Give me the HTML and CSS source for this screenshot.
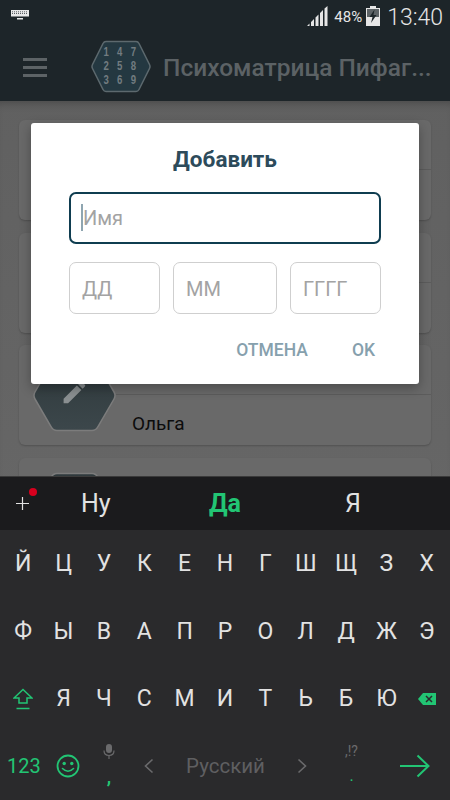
FILE: index.html
```html
<!DOCTYPE html>
<html lang="ru">
<head>
  <meta charset="UTF-8">
  <meta name="viewport" content="width=device-width, initial-scale=1.0">
  <title>Психоматрица Пифагора</title>
  <link rel="stylesheet" href="styles.css">
</head>
<body>
  <svg class="defs" width="0" height="0">
    <defs>
      <linearGradient id="hexFill" x1="0" y1="0" x2="0" y2="1">
        <stop offset="0" stop-color="#2f393c"/>
        <stop offset="1" stop-color="#3c474b"/>
      </linearGradient>
      <path id="hexShape" fill="url(#hexFill)" stroke="#7c7c7c" stroke-width="1.500" d="M24 1.500h35q4 0 6 4L81 33q2 3.500 0 7L65 67.500q-2 4-6 4H24q-4 0-6-4L2 40q-2-3.500 0-7L18 5.500q2-4 6-4z"/>
    </defs>
  </svg>
  <div class="screen">
    <div class="status-bar">
      <svg class="status-kbd" width="18" height="10" viewBox="0 0 18 10">
        <path fill="#e8e8e8" d="M0 0h18v6.500H0z"/>
        <path stroke="#1d2529" stroke-width=".7" stroke-dasharray="1 1" d="M1 1.800h16M1 3.500h16"/>
        <path fill="#e8e8e8" d="M6 8h6v1.500H6z"/>
      </svg>
      <svg class="status-signal" width="21" height="20" viewBox="0 0 21 20">
        <path fill="#e6e6e6" d="M0 20l2.500-2.500V20zM4 20v-4l3-3v7zM8.500 20v-8.500l3-3V20zM13 20V7l3-3v16zM17.500 20V2.500l3-2.500v20z"/>
      </svg>
      <span class="status-pct">48%</span>
      <svg class="status-battery" width="14" height="20" viewBox="0 0 14 20">
        <path fill="#e6e6e6" d="M4 0h6v2h4v18H0V2h4z"/>
        <path fill="#5d6366" d="M1 3h12v8H1z"/>
        <path fill="#1d2529" d="M8.500 3.500L3.500 11h3l-1.500 6 5.500-8H7.500z"/>
      </svg>
      <span class="status-time">13:40</span>
    </div>

    <div class="app-bar">
      <div class="burger"><i></i><i></i><i></i></div>
      <svg class="logo" width="60" height="54" viewBox="0 0 60 54">
        <path fill="#243841" stroke="#5d696e" stroke-width="1.500" stroke-linejoin="round" d="M15 1.500h30q2 0 3 2l10.500 21q1 2 0 4L48 49.500q-1 2-3 2H15q-2 0-3-2L1.500 28.500q-1-2 0-4L12 3.500q1-2 3-2z"/>
        <g class="logo-digits" transform="scale(.8 1)">
          <text x="19" y="16.500">1</text><text x="36" y="16.500">4</text><text x="53" y="16.500">7</text>
          <text x="19" y="30.500">2</text><text x="36" y="30.500">5</text><text x="53" y="30.500">8</text>
          <text x="19" y="44.500">3</text><text x="36" y="44.500">6</text><text x="53" y="44.500">9</text>
        </g>
      </svg>
      <div class="app-title">Психоматрица Пифаг...</div>
    </div>

    <div class="list">
      <div class="card">
        <svg class="hex" width="83" height="73" viewBox="0 0 83 73"><use href="#hexShape"/></svg>
        <div class="card-body"><div class="card-row"></div><div class="card-row"></div></div>
      </div>
      <div class="card">
        <svg class="hex" width="83" height="73" viewBox="0 0 83 73"><use href="#hexShape"/></svg>
        <div class="card-body"><div class="card-row"></div><div class="card-row"></div></div>
      </div>
      <div class="card">
        <svg class="hex" width="83" height="73" viewBox="0 0 83 73">
          <use href="#hexShape"/>
          <path fill="#8a8f91" transform="translate(27 19) scale(1.200)" d="M3 17.250V21h3.750L17.810 9.940l-3.750-3.750zM20.710 7.040a1 1 0 0 0 0-1.410l-2.340-2.340a1 1 0 0 0-1.410 0l-1.830 1.830 3.750 3.750z"/>
        </svg>
        <div class="card-body"><div class="card-row"></div><div class="card-row card-name">Ольга</div></div>
      </div>
      <div class="card">
        <svg class="hex" width="83" height="73" viewBox="0 0 83 73"><use href="#hexShape"/></svg>
        <div class="card-body"><div class="card-row"></div><div class="card-row"></div></div>
      </div>
    </div>

    <div class="dialog">
      <div class="dialog-title">Добавить</div>
      <div class="field field-active"><span class="caret"></span>Имя</div>
      <div class="date-row">
        <div class="field">ДД</div>
        <div class="field">ММ</div>
        <div class="field">ГГГГ</div>
      </div>
      <div class="dialog-actions">
        <span>ОТМЕНА</span>
        <span>OK</span>
      </div>
    </div>

    <div class="keyboard">
      <div class="suggest">
        <div class="suggest-plus">
          <svg width="13" height="13" viewBox="0 0 13 13"><path stroke="#e2e2e2" stroke-width="1.200" d="M0 6.500h13M6.500 0v13"/></svg>
          <span class="red-dot"></span>
        </div>
        <div class="suggest-word suggest-a">Ну</div>
        <div class="suggest-word suggest-b">Да</div>
        <div class="suggest-word suggest-c">Я</div>
      </div>
      <div class="keys">
        <span>Й</span><span>Ц</span><span>У</span><span>К</span><span>Е</span><span>Н</span><span>Г</span><span>Ш</span><span>Щ</span><span>З</span><span>Х</span>
        <span>Ф</span><span>Ы</span><span>В</span><span>А</span><span>П</span><span>Р</span><span>О</span><span>Л</span><span>Д</span><span>Ж</span><span>Э</span>
        <span>
          <svg width="20" height="22" viewBox="0 0 20 22"><path fill="none" stroke="#22c574" stroke-width="1.500" d="M10 1.500L1 10h5v5h8v-5h5z"/><path stroke="#22c574" stroke-width="1.500" d="M3.500 20.500h13"/></svg>
        </span>
        <span>Я</span><span>Ч</span><span>С</span><span>М</span><span>И</span><span>Т</span><span>Ь</span><span>Б</span><span>Ю</span>
        <span>
          <svg width="18" height="12" viewBox="0 0 18 12"><path fill="#22c574" d="M5 0h13v12H5L0 6z"/><path stroke="#2a2a2c" stroke-width="1.500" d="M8 3l6 6M14 3l-6 6"/></svg>
        </span>
      </div>
      <div class="bottom-row">
        <div class="key-123">123</div>
        <svg class="key-smile" width="24" height="24" viewBox="0 0 24 24">
          <circle cx="12" cy="12" r="10.500" fill="none" stroke="#22c574" stroke-width="1.800"/>
          <circle cx="8.200" cy="9.500" r="1.700" fill="#22c574"/>
          <circle cx="15.800" cy="9.500" r="1.700" fill="#22c574"/>
          <path fill="none" stroke="#22c574" stroke-width="1.600" stroke-linecap="round" d="M6.500 14.500q5.500 5.500 11 0"/>
        </svg>
        <div class="key-comma">
          <svg width="12" height="15" viewBox="0 0 12 15"><rect x="3" y="0" width="6" height="9" rx="3" fill="#6a6a6c"/><path fill="none" stroke="#6a6a6c" stroke-width="1.200" d="M1 6.500q0 5 5 5t5-5M6 11.500V15"/></svg>
          <span>,</span>
        </div>
        <div class="lang">
          <svg width="10" height="16" viewBox="0 0 10 16"><path fill="none" stroke="#6a6a6c" stroke-width="1.600" d="M8.500 1.500L1.500 8l7 6.500"/></svg>
          <span>Русский</span>
          <svg width="10" height="16" viewBox="0 0 10 16"><path fill="none" stroke="#6a6a6c" stroke-width="1.600" d="M1.500 1.500L8.500 8l-7 6.500"/></svg>
        </div>
        <div class="key-period"><small>,!?</small><span>.</span></div>
        <svg class="key-enter" width="30" height="24" viewBox="0 0 30 24"><path fill="none" stroke="#22c574" stroke-width="2" d="M0 12h28M17.500 1.500L28.500 12 17.500 22.500"/></svg>
      </div>
    </div>
  </div>
</body>
</html>
```

FILE: styles.css
```css
html, body {
  margin: 0;
  padding: 0;
}
body {
  font-family: 'Roboto', sans-serif;
  background: #000;
}
.defs {
  position: absolute;
}
.screen {
  position: relative;
  width: 450px;
  height: 800px;
  overflow: hidden;
  display: flex;
  flex-direction: column;
  background: linear-gradient(#5f5f5f, #6a6a6a);
}
.status-bar {
  height: 33px;
  flex: none;
  display: flex;
  align-items: center;
  background: #1d2529;
  color: #e6e6e6;
  padding: 0 7px 0 11px;
}
.status-kbd {
  margin-right: auto;
  margin-top: -3px;
}
.status-signal {
  margin-top: -2px;
}
.status-pct {
  font-size: 15px;
  margin: 0 4px 0 6px;
}
.status-battery {
  margin-top: -2px;
  margin-right: 7px;
}
.status-time {
  font-size: 23px;
  font-weight: 300;
  padding-top: 1px;
}
.app-bar {
  height: 68px;
  flex: none;
  display: flex;
  align-items: center;
  background: #1d2529;
  box-sizing: border-box;
  padding-left: 23px;
}
.burger {
  width: 24px;
  display: flex;
  flex-direction: column;
  gap: 5px;
  margin-right: 44px;
}
.burger i {
  display: block;
  height: 3px;
  background: #5d6366;
}
.logo {
  margin-right: 12px;
  flex: none;
}
.logo-digits text {
  font-family: 'Liberation Sans', sans-serif;
  font-size: 12px;
  font-weight: bold;
  text-anchor: middle;
  fill: #727c80;
}
.app-title {
  font-size: 24.500px;
  font-weight: 500;
  color: #5c6265;
  white-space: nowrap;
}
.list {
  flex: 1;
  padding: 19px 19px 0;
  display: flex;
  flex-direction: column;
  gap: 12.5px;
  box-shadow: inset 0 8px 8px -6px rgba(0,0,0,0.25);
}
.card {
  height: 100px;
  flex: none;
  display: flex;
  padding-left: 14px;
  background: #696969;
  border-radius: 6px;
  box-shadow: 0 1px 2px rgba(0,0,0,0.2);
}
.hex {
  margin-top: 14px;
  flex: none;
}
.card-body {
  flex: 1;
  display: flex;
  flex-direction: column;
}
.card-row {
  height: 50px;
  box-sizing: border-box;
  padding-left: 16px;
}
.card-row:first-child {
  border-bottom: 1px solid #5c5c5c;
}
.card-name {
  font-size: 19px;
  line-height: 58px;
  color: #0c0c0c;
}
.dialog {
  position: absolute;
  left: 31px;
  top: 123px;
  width: 388px;
  height: 261px;
  box-sizing: border-box;
  padding: 0 38px;
  background: #fff;
  border-radius: 3px;
  box-shadow: 0 4px 12px rgba(0,0,0,0.3);
}
.dialog-title {
  height: 69px;
  line-height: 72px;
  text-align: center;
  font-size: 22.500px;
  font-weight: 700;
  color: #2d4b5b;
}
.field {
  position: relative;
  box-sizing: border-box;
  height: 52px;
  line-height: 52px;
  padding-left: 12px;
  border: 1px solid #cfcfcf;
  border-radius: 7px;
  font-size: 20px;
  color: #a3a3a3;
}
.field-active {
  height: 52px;
  border: 2px solid #0f3d50;
  line-height: 48px;
}
.caret {
  position: absolute;
  left: 10px;
  top: 10px;
  width: 2px;
  height: 27px;
  background: #8ea5b0;
}
.date-row {
  display: grid;
  grid-template-columns: 91px 104px 91px;
  gap: 13px;
  margin-top: 18px;
}
.dialog-actions {
  display: flex;
  justify-content: flex-end;
  gap: 44px;
  padding: 26px 6px 0 0;
  font-size: 17.500px;
  font-weight: 500;
  color: #86a0ad;
}
.keyboard {
  position: absolute;
  left: 0;
  right: 0;
  bottom: 0;
  height: 324px;
  display: flex;
  flex-direction: column;
  background: #2a2a2c;
  border-top: 1px solid #3a3a3a;
  box-sizing: border-box;
}
.suggest {
  position: relative;
  height: 53px;
  flex: none;
  background: #1b1b1d;
  display: grid;
  grid-template-columns: 44px 112px 138px 1fr;
  align-items: center;
  color: #e2e2e2;
}
.suggest-plus {
  position: relative;
  display: flex;
  justify-content: center;
}
.red-dot {
  position: absolute;
  left: 29px;
  top: -9px;
  width: 8px;
  height: 8px;
  border-radius: 50%;
  background: #d7001e;
}
.suggest-word {
  font-size: 25px;
  text-align: center;
}
.suggest-a {
  text-align: left;
  padding-left: 37px;
}
.suggest-b {
  font-weight: 700;
  color: #22c574;
}
.suggest-c {
  text-align: left;
  padding-left: 51px;
}
.keys {
  display: grid;
  grid-template-columns: repeat(11, 1fr);
  grid-auto-rows: 67.500px;
  padding: 0 3px;
  font-size: 23px;
  color: #e2e2e2;
}
.keys span {
  display: flex;
  align-items: center;
  justify-content: center;
}
.bottom-row {
  flex: 1;
  display: flex;
  align-items: center;
  position: relative;
}
.key-123 {
  font-size: 20px;
  color: #22c574;
  margin-left: 7px;
  width: 36px;
}
.key-smile {
  margin-left: 13px;
}
.key-comma {
  width: 24px;
  margin-left: 17px;
  padding-bottom: 4px;
  display: flex;
  flex-direction: column;
  align-items: center;
  gap: 10px;
  color: #22c574;
  font-size: 18px;
  font-weight: 700;
  line-height: 16px;
}
.lang {
  width: 163px;
  margin-left: 23px;
  display: flex;
  align-items: center;
  justify-content: space-between;
  font-size: 20.500px;
  color: #5f5f61;
}
.key-period {
  width: 24px;
  margin-left: 32.500px;
  padding-bottom: 4px;
  display: flex;
  flex-direction: column;
  align-items: center;
  gap: 10px;
  color: #22c574;
  font-size: 16px;
  line-height: 16px;
}
.key-period small {
  font-size: 14px;
  line-height: 14px;
  color: #6a6a6c;
}
.key-enter {
  margin-left: 36px;
}
```
